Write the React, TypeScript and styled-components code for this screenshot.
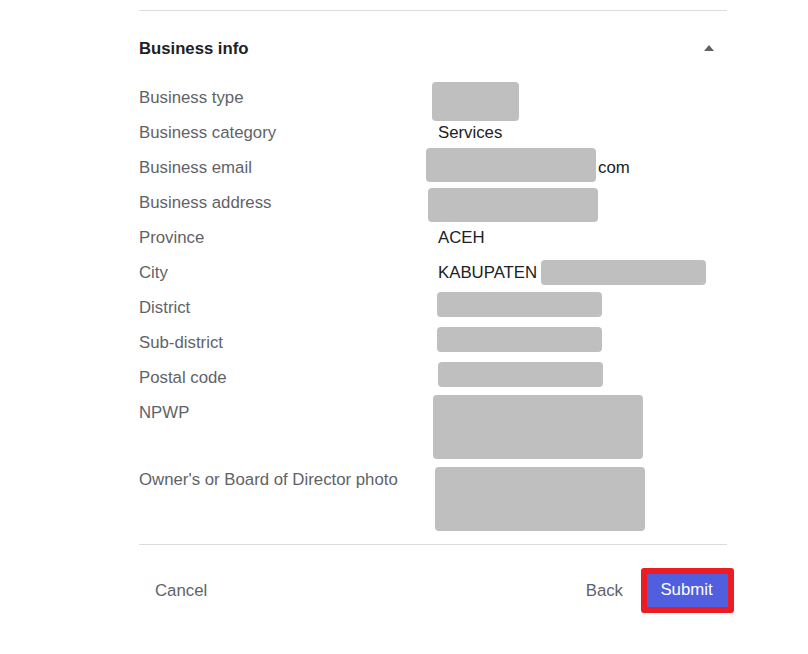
import React from "react";
import styled, { createGlobalStyle } from "styled-components";

const GlobalStyle = createGlobalStyle`
  html, body {
    margin: 0;
    padding: 0;
    background: #ffffff;
    font-family: "Liberation Sans", Arial, sans-serif;
  }
`;

type Block = { w: number; h: number; mt?: number; ml?: number };

type Field = {
  label: string;
  text?: string;
  after?: string;
  block?: Block;
  height?: number;
  inline?: boolean;
};

const fields: Field[] = [
  { label: "Business type", block: { w: 87, h: 39, mt: 2, ml: -6 } },
  { label: "Business category", text: "Services" },
  { label: "Business email", block: { w: 170, h: 34, mt: -2, ml: -12 }, after: "com" },
  { label: "Business address", block: { w: 170, h: 34, mt: 3, ml: -10 } },
  { label: "Province", text: "ACEH" },
  { label: "City", text: "KABUPATEN", block: { w: 165, h: 25, ml: 4 }, inline: true },
  { label: "District", block: { w: 165, h: 25, mt: 2, ml: -1 } },
  { label: "Sub-district", block: { w: 165, h: 25, mt: 2, ml: -1 } },
  { label: "Postal code", block: { w: 165, h: 25, mt: 2, ml: 0 } },
  { label: "NPWP", block: { w: 210, h: 64, mt: 0, ml: -5 }, height: 67 },
  { label: "Owner's or Board of Director photo", block: { w: 210, h: 64, mt: 5, ml: -3 }, height: 82 },
];

function App() {
  return (
    <>
      <GlobalStyle />
      <Page>
        <Panel>
          <Divider $mt={10} />
          <Header>
            <Title>Business info</Title>
            <Caret viewBox="0 0 10 6" aria-hidden>
              <path d="M0 6 L5 0 L10 6 Z" fill="#5f6368" />
            </Caret>
          </Header>
          <List>
            {fields.map((f) => (
              <Row key={f.label} $h={f.height ?? 35}>
                <Label>{f.label}</Label>
                <Value $inline={!!f.inline}>
                  {f.text && <ValueText>{f.text}</ValueText>}
                  {f.block && (
                    <Redact
                      $w={f.block.w}
                      $h={f.block.h}
                      $mt={f.block.mt ?? 0}
                      $ml={f.block.ml ?? 0}
                      $center={!!f.inline}
                    />
                  )}
                  {f.after && <ValueText $gap={2}>{f.after}</ValueText>}
                </Value>
              </Row>
            ))}
          </List>
          <Divider $mt={0} />
          <Footer>
            <TextButton>Cancel</TextButton>
            <Actions>
              <TextButton>Back</TextButton>
              <Highlight>
                <SubmitButton>Submit</SubmitButton>
              </Highlight>
            </Actions>
          </Footer>
        </Panel>
      </Page>
    </>
  );
}

const Page = styled.div`
  width: 808px;
  min-height: 654px;
  padding-left: 139px;
  box-sizing: border-box;
`;

const Panel = styled.div`
  width: 588px;
`;

const Divider = styled.div<{ $mt: number }>`
  height: 1px;
  background: #dadce0;
  margin-top: ${(p) => p.$mt}px;
`;

const Header = styled.div`
  display: flex;
  align-items: center;
  justify-content: space-between;
  height: 75px;
  padding-right: 13px;
  box-sizing: border-box;
`;

const Title = styled.h2`
  margin: 0;
  font-size: 16.7px;
  font-weight: 700;
  color: #202124;
`;

const Caret = styled.svg`
  width: 10px;
  height: 6px;
  margin-top: -2px;
`;

const List = styled.div`
  display: flex;
  flex-direction: column;
  margin-top: -6px;
`;

const Row = styled.div<{ $h: number }>`
  display: grid;
  grid-template-columns: 299px 1fr;
  height: ${(p) => p.$h}px;
  align-items: start;
`;

const Label = styled.div`
  font-size: 16.8px;
  line-height: 35px;
  color: #5f6368;
`;

const Value = styled.div<{ $inline: boolean }>`
  display: flex;
  align-items: ${(p) => (p.$inline ? "center" : "flex-start")};
  height: ${(p) => (p.$inline ? "35px" : "auto")};
`;

const ValueText = styled.span<{ $gap?: number }>`
  font-size: 16.8px;
  line-height: 35px;
  color: #202124;
  margin-left: ${(p) => p.$gap ?? 0}px;
  white-space: nowrap;
`;

const Redact = styled.div<{ $w: number; $h: number; $mt: number; $ml: number; $center: boolean }>`
  flex: none;
  width: ${(p) => p.$w}px;
  height: ${(p) => p.$h}px;
  margin-top: ${(p) => (p.$center ? 0 : p.$mt)}px;
  margin-left: ${(p) => p.$ml}px;
  background: #bfbfbf;
  border-radius: 4px;
`;

const Footer = styled.div`
  display: flex;
  align-items: center;
  justify-content: space-between;
  height: 92px;
  margin-right: -7px;
`;

const Actions = styled.div`
  display: flex;
  align-items: center;
  gap: 2px;
`;

const TextButton = styled.button`
  border: none;
  background: transparent;
  font-family: inherit;
  font-size: 16.8px;
  color: #5f6368;
  padding: 8px 16px;
  cursor: pointer;
`;

const Highlight = styled.div`
  border: 6px solid #ec1c24;
  border-radius: 3px;
  display: flex;
  margin-top: -2px;
`;

const SubmitButton = styled.button`
  border: none;
  background: #4f5fe0;
  color: #ffffff;
  font-family: inherit;
  font-size: 16.8px;
  width: 81px;
  height: 33px;
  padding: 0 2px 0 0;
  cursor: pointer;
`;

export default App;
